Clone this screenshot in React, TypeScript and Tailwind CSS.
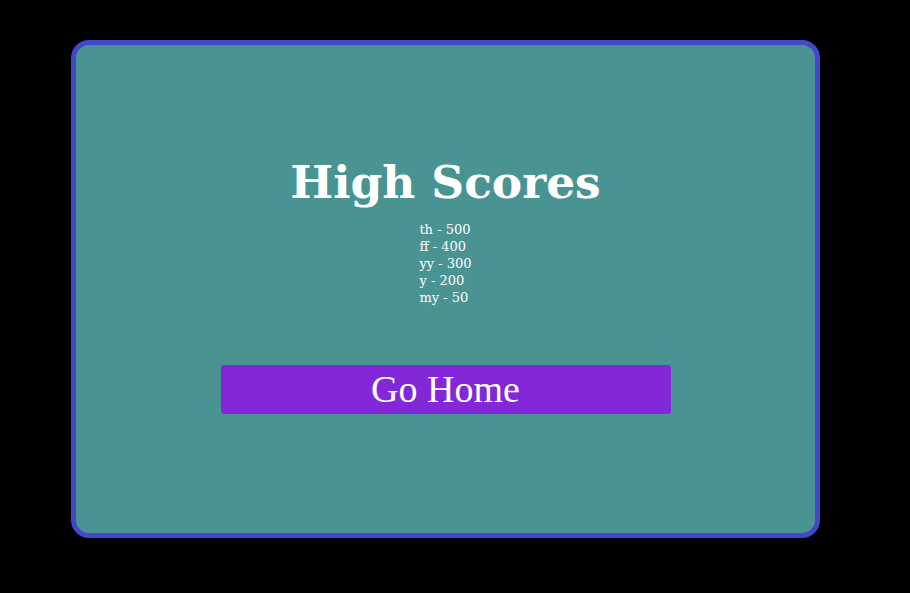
export default function App() {
  const scores = [
    { name: 'th', score: 500 },
    { name: 'ff', score: 400 },
    { name: 'yy', score: 300 },
    { name: 'y', score: 200 },
    { name: 'my', score: 50 },
  ];

  return (
    <div className="min-h-[593px] w-full bg-black pl-[71px] pt-[40px]">
      {/* Card */}
      <div className="flex h-[498px] w-[749px] flex-col items-center rounded-[18px] border-[5px] border-[#4447c9] bg-[#4a9393] pt-[113px] font-['DejaVu_Serif',serif] text-white">
        <h1 className="text-[45.5px] font-bold leading-[48px]">High Scores</h1>

        {/* Score list */}
        <ul className="mt-[15px] text-left text-[13px] leading-[17px]">
          {scores.map((s) => (
            <li key={s.name}>
              {s.name} - {s.score}
            </li>
          ))}
        </ul>

        <button className="mt-[59px] h-[49px] w-[450px] rounded-[3px] bg-[#8228d9] font-['Liberation_Serif',serif] text-[38px] leading-[49px] text-white">
          Go Home
        </button>
      </div>
    </div>
  );
}
